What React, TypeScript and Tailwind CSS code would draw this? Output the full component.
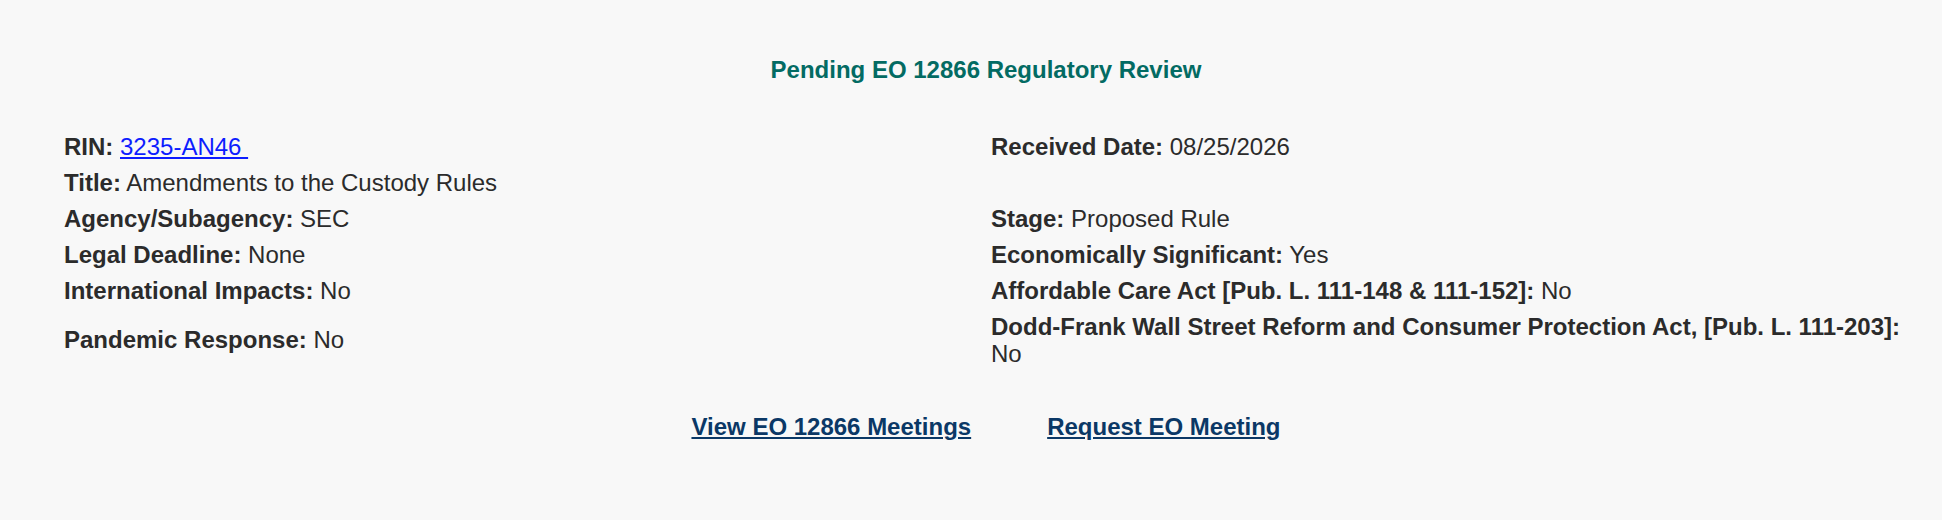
import React from "react";

interface Field { label: string; value: React.ReactNode; }

const rows: [Field | null, Field | null][] = [
  [
    { label: "RIN:", value: <a href="#" className="text-[#0d1dff] underline">3235-AN46&nbsp;</a> },
    { label: "Received Date:", value: "08/25/2026" },
  ],
  [{ label: "Title:", value: "Amendments to the Custody Rules" }, null],
  [{ label: "Agency/Subagency:", value: "SEC" }, { label: "Stage:", value: "Proposed Rule" }],
  [{ label: "Legal Deadline:", value: "None" }, { label: "Economically Significant:", value: "Yes" }],
  [
    { label: "International Impacts:", value: "No" },
    { label: "Affordable Care Act [Pub. L. 111-148 & 111-152]:", value: "No" },
  ],
  [
    { label: "Pandemic Response:", value: "No" },
    { label: "Dodd-Frank Wall Street Reform and Consumer Protection Act, [Pub. L. 111-203]:", value: "No" },
  ],
];

function Cell({ f }: { f: Field | null }) {
  if (!f) return <div className="py-[4.5px]" />;
  return (
    <div className="py-[4.5px]">
      <span className="font-bold">{f.label}</span> {f.value}
    </div>
  );
}

export default function App() {
  return (
    <div className="min-h-screen bg-[#f8f8f8] text-[#2b2b2b] font-['Liberation_Sans',Arial,sans-serif] text-[24px] leading-[27px] pl-[64px] pr-[34px] pt-[56px]">
      <h2 className="text-center font-bold text-[#036b63]">Pending EO 12866 Regulatory Review</h2>

      <div className="grid grid-cols-[927px_1fr] items-center mt-[45px]">
        {rows.map(([l, r], i) => (
          <React.Fragment key={i}>
            <Cell f={l} />
            <Cell f={r} />
          </React.Fragment>
        ))}
      </div>

      <div className="flex justify-center gap-[76px] mt-[42px] font-bold">
        <a href="#" className="text-[#0b3866] underline">View EO 12866 Meetings</a>
        <a href="#" className="text-[#0b3866] underline">Request EO Meeting</a>
      </div>
    </div>
  );
}
